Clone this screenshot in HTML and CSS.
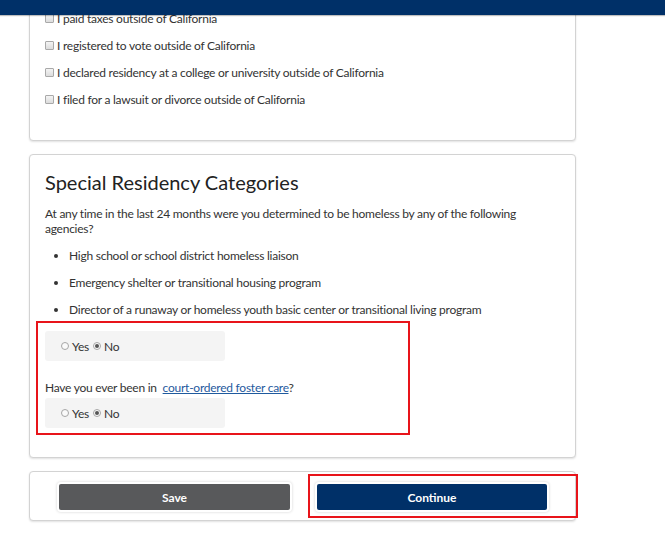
FILE: index.html
```html
<!DOCTYPE html>
<html lang="en">
<head>
<meta charset="utf-8">
<title>Residency</title>
<link rel="stylesheet" href="styles.css">
</head>
<body>
<div class="topbar"></div>
<main class="page">
  <section class="card card-first">
    <ul class="checklist">
      <li><span class="cb"></span>I paid taxes outside of California</li>
      <li><span class="cb"></span>I registered to vote outside of California</li>
      <li><span class="cb"></span>I declared residency at a college or university outside of California</li>
      <li><span class="cb"></span>I filed for a lawsuit or divorce outside of California</li>
    </ul>
  </section>

  <section class="card card-special">
    <h2 class="title">Special Residency Categories</h2>
    <p class="question">At any time in the last 24 months were you determined to be homeless by any of the following agencies?</p>
    <ul class="bullets">
      <li>High school or school district homeless liaison</li>
      <li>Emergency shelter or transitional housing program</li>
      <li>Director of a runaway or homeless youth basic center or transitional living program</li>
    </ul>
    <div class="answers">
      <div class="radio-group">
        <label class="opt"><span class="rd"></span>Yes</label>
        <label class="opt"><span class="rd on"></span>No</label>
      </div>
      <p class="question q2">Have you ever been in <a href="#" class="link">court-ordered foster care</a>?</p>
      <div class="radio-group">
        <label class="opt"><span class="rd"></span>Yes</label>
        <label class="opt"><span class="rd on"></span>No</label>
      </div>
      <div class="highlight hl-answers"></div>
    </div>
  </section>

  <section class="card card-actions">
    <button class="btn btn-save">Save</button>
    <div class="btn-wrap">
      <button class="btn btn-continue">Continue</button>
      <div class="highlight hl-continue"></div>
    </div>
  </section>
</main>
</body>
</html>
```

FILE: styles.css
```css
* { box-sizing: border-box; }
html, body { margin: 0; padding: 0; background: #fff; }
body {
  font-family: Lato, "Open Sans", sans-serif;
  font-size: 12px;
  letter-spacing: -0.25px;
  color: #333;
  width: 665px;
  height: 537px;
  overflow: hidden;
}
.topbar {
  position: fixed;
  top: 0; left: 0; right: 0;
  height: 15px;
  background: #003068;
  box-shadow: 0 1px 1px rgba(0,0,0,.25);
  z-index: 10;
}
.page {
  width: 547px;
  margin-left: 29px;
  display: flex;
  flex-direction: column;
  gap: 13px;
}
.card {
  background: #fff;
  border: 1px solid #d3d3d3;
  border-radius: 4px;
  box-shadow: 0 1px 2px rgba(0,0,0,.12);
}
.card-first {
  height: 141px;
  padding: 10px 15px 0;
}
.checklist {
  list-style: none;
  margin: 0;
  padding: 0;
  display: flex;
  flex-direction: column;
  gap: 12px;
}
.checklist li {
  display: flex;
  align-items: center;
  line-height: 15px;
}
.cb {
  width: 9px;
  height: 9px;
  border: 1px solid #a9a9a9;
  border-radius: 1px;
  background: linear-gradient(#f4f4f4, #dcdcdc);
  margin-right: 3px;
  flex: none;
}
.card-special {
  height: 304px;
  padding: 16px 15px 0;
}
.title {
  margin: 0 0 13px;
  font-size: 20px;
  font-weight: 400;
  line-height: 22px;
  letter-spacing: 0;
  color: #222;
}
.question {
  margin: 0;
  line-height: 15px;
  padding-right: 40px;
}
.bullets {
  margin: 12px 0 0;
  padding: 0 0 0 24px;
  display: flex;
  flex-direction: column;
  gap: 12px;
}
.bullets li { line-height: 15px; }
.answers {
  position: relative;
  margin-top: 14px;
}
.radio-group {
  width: 180px;
  height: 30px;
  background: #f4f4f4;
  border-radius: 3px;
  display: flex;
  align-items: center;
  gap: 4px;
  padding-left: 16px;
}
.opt { display: flex; align-items: center; gap: 3px; }
.rd {
  width: 8px;
  height: 8px;
  border-radius: 50%;
  border: 1px solid #a6a6a6;
  background: #fafafa;
  position: relative;
}
.rd.on::after {
  content: "";
  position: absolute;
  left: 1px; top: 1px;
  width: 4px; height: 4px;
  border-radius: 50%;
  background: #555;
}
.q2 { margin: 19px 0 3px; }
.link { color: #1f5a9e; text-decoration: underline; margin-left: 3px; }
.highlight {
  position: absolute;
  border: 2px solid #e8141a;
  pointer-events: none;
}
.hl-answers {
  left: -9px; top: -10px;
  width: 374px; height: 114px;
}
.card-actions {
  height: 50px;
  display: grid;
  grid-template-columns: 231px 230px;
  column-gap: 27px;
  padding: 12px 0 0 29px;
}
.btn {
  height: 26px;
  width: 100%;
  border: none;
  border-radius: 2px;
  color: #fff;
  font-family: Lato, "Open Sans", sans-serif;
  font-weight: 700;
  font-size: 12px;
  box-shadow: 0 0 0 2px #fff, 0 0 3px 2px rgba(0,0,0,.18);
}
.btn-save { background: #58595b; }
.btn-continue { background: #003068; }
.btn-wrap { position: relative; }
.hl-continue {
  left: -9px; top: -10px;
  width: 270px; height: 44px;
}
```
